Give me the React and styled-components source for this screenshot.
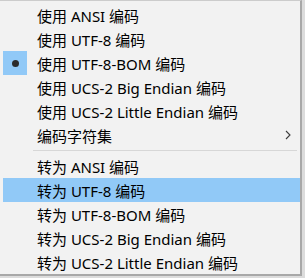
import React from "react";
import styled, { createGlobalStyle } from "styled-components";

const Global = createGlobalStyle`
  html, body { margin: 0; padding: 0; background: #dcdcdc; }
  body { width: 305px; height: 278px; overflow: hidden; }
`;

const Menu = styled.div`
  box-sizing: border-box;
  width: 302px;
  height: 276px;
  background: #f2f2f2;
  border-top: 1px solid #cccccc;
  border-right: 2px solid #a8a8a8;
  border-bottom: 2px solid #a8a8a8;
  padding: 2px 0 0 3px;
  display: flex;
  flex-direction: column;
  font-family: "Noto Sans", "Noto Sans CJK SC", sans-serif;
  font-size: 15px;
  color: #000;
`;

const Item = styled.div`
  position: relative;
  display: flex;
  align-items: center;
  height: 24px;
  flex: 0 0 24px;
  padding-left: 34px;
  background: ${(p) => (p.$active ? "#91c9f7" : "transparent")};
  white-space: nowrap;
`;

const Check = styled.span`
  position: absolute;
  left: 0;
  top: 0;
  width: 24px;
  height: 24px;
  background: #91c9f7;
  display: flex;
  align-items: center;
  justify-content: center;
  &::after {
    content: "";
    width: 7px;
    height: 7px;
    border-radius: 50%;
    background: #2b2b2b;
  }
`;

const Arrow = styled.svg`
  position: absolute;
  right: 9px;
  top: 7px;
`;

const Separator = styled.div`
  flex: 0 0 7px;
  display: flex;
  align-items: center;
  padding: 0 3px 0 30px;
  &::after {
    content: "";
    flex: 1;
    height: 1px;
    background: #d7d7d7;
  }
`;

const top = [
  { label: "使用 ANSI 编码" },
  { label: "使用 UTF-8 编码" },
  { label: "使用 UTF-8-BOM 编码", checked: true },
  { label: "使用 UCS-2 Big Endian 编码" },
  { label: "使用 UCS-2 Little Endian 编码" },
  { label: "编码字符集", sub: true },
];

const bottom = [
  { label: "转为 ANSI 编码" },
  { label: "转为 UTF-8 编码", active: true },
  { label: "转为 UTF-8-BOM 编码" },
  { label: "转为 UCS-2 Big Endian 编码" },
  { label: "转为 UCS-2 Little Endian 编码" },
];

function Row({ item }) {
  return (
    <Item $active={item.active}>
      {item.checked && <Check />}
      {item.label}
      {item.sub && (
        <Arrow width="6" height="10" viewBox="0 0 6 10">
          <path d="M1 1 L5 5 L1 9" fill="none" stroke="#3c3c3c" strokeWidth="1.1" />
        </Arrow>
      )}
    </Item>
  );
}

export default function App() {
  return (
    <>
      <Global />
      <Menu>
        {top.map((it) => (
          <Row key={it.label} item={it} />
        ))}
        <Separator />
        {bottom.map((it) => (
          <Row key={it.label} item={it} />
        ))}
      </Menu>
    </>
  );
}
